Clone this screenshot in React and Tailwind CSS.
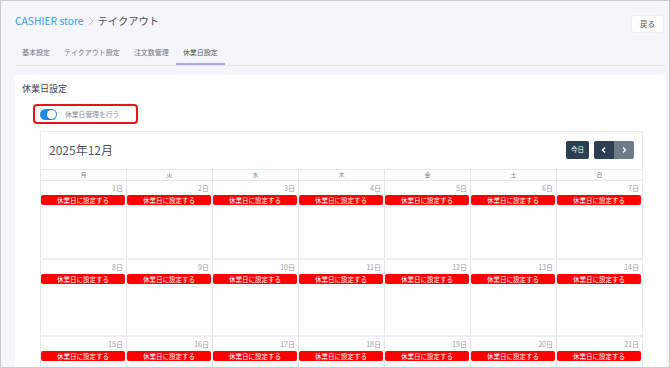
import React from 'react';

const font = { fontFamily: '"Noto Sans CJK JP", "Noto Sans", sans-serif' };

const tabs = ['基本設定', 'テイクアウト設定', '注文数管理', '休業日設定'];
const dayNames = ['月', '火', '水', '木', '金', '土', '日'];

// 2025年12月は月曜始まり（表示は3週分）
const weeks = [];
for (let w = 0; w < 3; w++) {
  const row = [];
  for (let d = 0; d < 7; d++) {
    row.push(w * 7 + d + 1);
  }
  weeks.push(row);
}

function DayCell({ day }) {
  return (
    <div className="border-l border-[#e6e6ea] h-full">
      <div className="text-right text-[7px] leading-[10px] text-[#9a9ca4] pr-[3px] pt-[2px]">{day}日</div>
      <div className="mt-[2px] mr-[1px] h-[10px] bg-[#ff0000] rounded-[2px] flex items-center justify-center text-white text-[6.5px] leading-[10px]">
        休業日に設定する
      </div>
    </div>
  );
}

export default function App() {
  return (
    <div style={font} className="w-[670px] h-[368px] overflow-hidden border border-[#cbcbcb] bg-[#f5f6fa]">
      {/* ヘッダー */}
      <div className="flex justify-between items-start pt-[12px] pl-[14px] pr-[5px]">
        <div className="flex items-center h-[16px] text-[10.3px] leading-[16px]">
          <span className="text-[#3a9fe6]">CASHIER store</span>
          <svg width="12" height="12" viewBox="0 0 12 12" className="mx-[1px]">
            <path d="M4 2 L8 6 L4 10" fill="none" stroke="#c2c4ca" strokeWidth="1" />
          </svg>
          <span className="text-[#4a4d55]">テイクアウト</span>
        </div>
        <button className="mt-[2px] w-[33px] h-[18px] bg-white border border-[#eceef3] rounded-[3px] text-[7.5px] text-[#555] flex items-center justify-center">
          戻る
        </button>
      </div>

      {/* タブ */}
      <div className="mt-[14px] ml-[14px] mr-[3px] flex border-b border-[#e6e8ee]">
        {tabs.map((t, i) => (
          <div
            key={t}
            className={
              'px-[7px] pb-[6px] text-[7px] leading-[10px] border-b-2 ' +
              (i === 3 ? 'border-[#aeaaf0] text-[#555860]' : 'border-transparent text-[#707380]')
            }
          >
            {t}
          </div>
        ))}
      </div>

      {/* カード */}
      <div className="mt-[9px] ml-[14px] mr-[3px] bg-white rounded-t-[3px] pl-[7px] pt-[8px] h-[400px]">
        <div className="text-[9px] leading-[12px] text-[#3f4249]">休業日設定</div>

        <div className="mt-[9px] ml-[11px] w-[105px] h-[20px] border-2 border-[#e8141b] rounded-[4px] flex items-center pl-[5px]">
          <div className="w-[17px] h-[11px] rounded-full bg-[#1e8ae6] flex items-center justify-end pr-[1px]">
            <div className="w-[9px] h-[9px] rounded-full bg-white" />
          </div>
          <span className="ml-[8px] text-[6.8px] leading-[10px] text-[#8a8d95]">休業日管理を行う</span>
        </div>

        {/* カレンダー */}
        <div className="mt-[7px] ml-[18px] w-[603px] border-t border-r border-[#ececf0]">
          <div className="border-l border-[#ececf0] flex items-center justify-between pl-[8px] pr-[8px] pt-[9px] pb-[10px]">
            <div className="text-[12px] leading-[18px] text-[#555962]">2025年12月</div>
            <div className="flex gap-[5px]">
              <div className="w-[23px] h-[18px] rounded-[2px] bg-[#2c3e50] text-white text-[6.5px] flex items-center justify-center">今日</div>
              <div className="flex rounded-[2px] overflow-hidden">
                <div className="w-[20px] h-[18px] bg-[#2c3e50] flex items-center justify-center">
                  <svg width="8" height="8" viewBox="0 0 8 8">
                    <path d="M5 1.5 L2.5 4 L5 6.5" fill="none" stroke="#fff" strokeWidth="1.3" />
                  </svg>
                </div>
                <div className="w-[20px] h-[18px] bg-[#6e7b89] flex items-center justify-center">
                  <svg width="8" height="8" viewBox="0 0 8 8">
                    <path d="M3 1.5 L5.5 4 L3 6.5" fill="none" stroke="#fff" strokeWidth="1.3" />
                  </svg>
                </div>
              </div>
            </div>
          </div>

          <div className="grid grid-cols-7 border-t border-b border-[#e6e6ea]">
            {dayNames.map((d) => (
              <div key={d} className="border-l border-[#e6e6ea] h-[10px] text-center text-[6px] leading-[10px] text-[#7a7d86]">
                {d}
              </div>
            ))}
          </div>

          {weeks.map((row, wi) => (
            <div
              key={wi}
              className={'grid grid-cols-7 h-[77px] ' + (wi > 0 ? 'border-t-2 border-[#eeeef2]' : '')}
            >
              {row.map((day, di) => (
                <DayCell key={di} day={day} />
              ))}
            </div>
          ))}
        </div>
      </div>
    </div>
  );
}
